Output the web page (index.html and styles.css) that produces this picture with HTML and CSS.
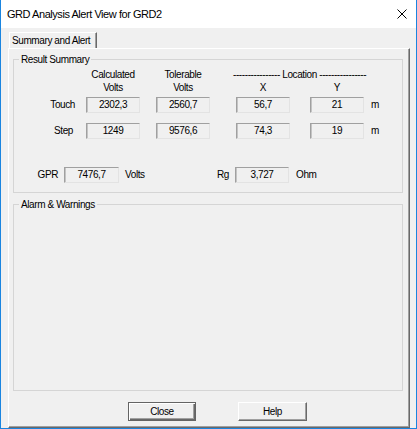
FILE: index.html
```html
<!DOCTYPE html>
<html>
<head>
<meta charset="utf-8">
<title>GRD Analysis Alert View for GRD2</title>
<link rel="stylesheet" href="styles.css">
</head>
<body>
<div class="window">
  <div class="titlebar">
    <span class="title">GRD Analysis Alert View for GRD2</span>
    <svg class="close" width="10" height="10" viewBox="0 0 10 10"><path d="M0.5 0.5L9.5 9.5M9.5 0.5L0.5 9.5" stroke="#000" stroke-width="1" fill="none"/></svg>
  </div>
  <div class="client">
    <div class="tabstrip"><div class="tab">Summary and Alert</div></div>
    <div class="tabpage">
      <fieldset class="group result">
        <legend>Result Summary</legend>
        <div class="grid">
          <div class="hdr c2 rh">Calculated<br>Volts</div>
          <div class="hdr c4 rh">Tolerable<br>Volts</div>
          <div class="hdr loc">---------------- Location ----------------</div>
          <div class="hdr c6 r2">X</div>
          <div class="hdr c8 r2">Y</div>

          <div class="lbl c1 r4 touch">Touch</div>
          <div class="box c2 r4">2302,3</div>
          <div class="box c4 r4">2560,7</div>
          <div class="box c6 r4">56,7</div>
          <div class="box c8 r4">21</div>
          <div class="unit c9 r4">m</div>

          <div class="lbl c1 r6 step">Step</div>
          <div class="box c2 r6">1249</div>
          <div class="box c4 r6">9576,6</div>
          <div class="box c6 r6">74,3</div>
          <div class="box c8 r6">19</div>
          <div class="unit c9 r6">m</div>
        </div>
        <div class="gpr">
          <div class="lbl">GPR</div>
          <div class="box">7476,7</div>
          <div class="unit">Volts</div>
          <div class="lbl">Rg</div>
          <div class="box">3,727</div>
          <div class="unit">Ohm</div>
        </div>
      </fieldset>
      <fieldset class="group alarm">
        <legend>Alarm &amp; Warnings</legend>
      </fieldset>
      <div class="buttons">
        <button class="btn default">Close</button>
        <button class="btn help">Help</button>
      </div>
    </div>
  </div>
</div>
</body>
</html>
```
FILE: styles.css
```css
* { box-sizing: border-box; }
html, body { margin: 0; padding: 0; background: #fff; }
body {
  font-family: "Liberation Sans", Arial, sans-serif;
  font-size: 10px;
  letter-spacing: -0.4px;
  color: #000;
}
.window {
  width: 417px;
  height: 429px;
  border: 1px solid #1a85e0;
  border-top: 0;
  display: flex;
  flex-direction: column;
}
.titlebar {
  height: 28px;
  flex: none;
  background: #fff;
  display: flex;
  align-items: center;
  padding: 0 9px 0 6px;
}
.title {
  flex: 1;
  font-family: "Liberation Sans", Arial, sans-serif;
  font-size: 11px;
  letter-spacing: -0.45px;
  color: #000;
}
.close { display: block; }
.client {
  flex: 1;
  background: #f0f0f0;
  padding: 4px 6px 0 7px;
  display: flex;
  flex-direction: column;
}
.tabstrip { display: flex; height: 16px; flex: none; }
.tab {
  margin-left: 1px;
  width: 88px;
  height: 16px;
  border-top: 1px solid #fff;
  border-left: 1px solid #fff;
  border-right: 1px solid #696969;
  box-shadow: inset -1px 0 0 #a0a0a0;
  padding-left: 2px;
  line-height: 15px;
  white-space: nowrap;
}
.tabpage {
  flex: 1;
  display: flex;
  flex-direction: column;
  border-top: 1px solid #fff;
  border-left: 1px solid #fff;
  border-right: 1px solid #696969;
  border-bottom: 1px solid #696969;
  box-shadow: inset -1px -1px 0 #a0a0a0;
  padding: 0 6px 6px 4px;
}
.group {
  margin: 0;
  padding: 0;
  border: 1px solid #d5d5d5;
  min-width: 0;
}
.group legend {
  margin-left: 5px;
  padding: 0 2px;
  line-height: 13px;
}
.result { margin-top: 4px; padding: 2px 0 9px 0; flex: none; }
.alarm { margin-top: 5px; flex: 1; }

.grid {
  display: grid;
  grid-template-columns: 72px 54px 16px 54px 26px 54px 20px 54px 1fr;
  grid-template-rows: 13px 13px 3px 16px 10px 16px;
}
.hdr { text-align: center; line-height: 13px; white-space: nowrap; }
.c1 { grid-column: 1; }
.c2 { grid-column: 2; }
.c4 { grid-column: 4; }
.c6 { grid-column: 6; }
.c8 { grid-column: 8; }
.c9 { grid-column: 9; }
.rh { grid-row: 1 / span 2; }
.r2 { grid-row: 2; }
.r4 { grid-row: 4; }
.r6 { grid-row: 6; }
.loc { grid-column: 5 / 10; grid-row: 1; justify-self: start; margin-left: 23px; }

.lbl { text-align: right; line-height: 16px; white-space: nowrap; }
.touch { padding-right: 11px; }
.step { padding-right: 13px; }
.unit { line-height: 16px; padding-left: 7px; white-space: nowrap; }

.box {
  height: 16px;
  line-height: 14px;
  text-align: center;
  background: #f0f0f0;
  border: 1px solid;
  border-color: #a0a0a0 #e3e3e3 #e3e3e3 #a0a0a0;
  box-shadow: inset 1px 0 0 #c4c4c4;
  white-space: nowrap;
}

.gpr {
  display: grid;
  grid-template-columns: 50px 55px 80px 36px 54px 1fr;
  height: 16px;
  margin-top: 28px;
}
.gpr .lbl { padding-right: 6px; }
.gpr .unit { padding-left: 6px; }
.gpr .unit:last-child { padding-left: 7px; }

.buttons {
  flex: none;
  display: flex;
  gap: 42px;
  margin-top: 11px;
  padding-left: 115px;
}
.btn {
  width: 68px;
  height: 19px;
  margin: 0;
  padding: 0;
  font: inherit;
  letter-spacing: inherit;
  color: #000;
  background: #f0f0f0;
  border: 1px solid;
  border-color: #fff #696969 #696969 #fff;
  box-shadow: inset -1px -1px 0 #a0a0a0;
  line-height: 15px;
}
.btn.help { width: 69px; }
.btn.default {
  border: 1px solid #646464;
  box-shadow: inset 1px 1px 0 #fff, inset -1px -1px 0 #696969, inset -2px -2px 0 #a0a0a0;
}
```
